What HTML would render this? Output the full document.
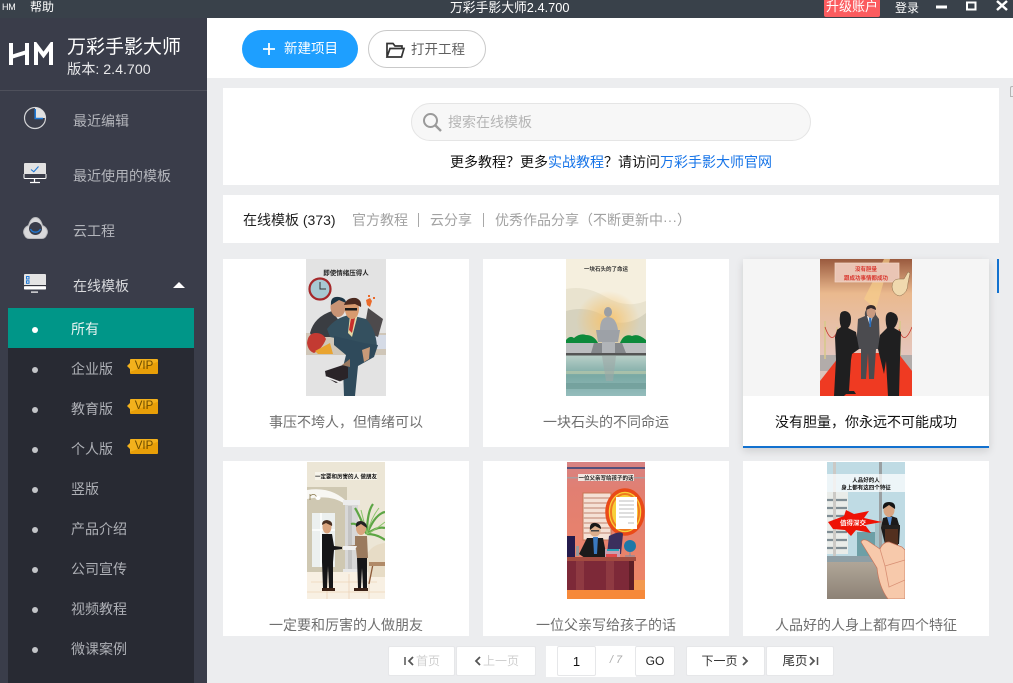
<!DOCTYPE html>
<html lang="zh-CN"><head><meta charset="utf-8"><title>万彩手影大师</title>
<style>
*{margin:0;padding:0;box-sizing:border-box}
html,body{width:1013px;height:683px;overflow:hidden;background:#ecedef}
body{position:relative;font-family:"Liberation Sans","Noto Sans CJK SC",sans-serif;font-size:14px}
.a{position:absolute;white-space:nowrap}
svg{position:absolute;display:block;overflow:hidden}
.nav{left:73px;color:#b3b5bb;line-height:20px;font-size:14px}
.sub{left:71px;color:#aeb0b6;line-height:20px;font-size:14px}
.dot{left:32px;width:6px;height:6px;border-radius:50%;background:#c4c5c9}
.vip{left:130px;width:28px;height:15px;background:linear-gradient(160deg,#f3b11c 50%,#e89f08 52%);border-radius:1px;color:#6d4c00;font-size:11.5px;line-height:15px;text-align:center}
.vip:before{content:"";position:absolute;left:-3px;top:4px;border-right:3px solid #f3b11c;border-top:3px solid transparent;border-bottom:3px solid transparent}
.card{background:#fff}
.cap{text-align:center;color:#6f6f6f;font-size:14px;line-height:20px}
.pg{background:#fff;border:1px solid #e6e7e9;height:30px;top:646px;text-align:center;line-height:29px;font-size:12px;color:#333;border-radius:2px}
.dim{color:#cfcfcf}
</style></head><body>

<div class="a" style="left:0;top:0;width:1013px;height:18px;background:#39414a"></div>
<div class="a" style="left:2px;top:2px;color:#fff;font-size:9px;line-height:10px;letter-spacing:-.3px">HM</div>
<div class="a" style="left:30px;top:-2px;color:#fff;font-size:12px;line-height:18px">帮助</div>
<div class="a" style="left:450px;top:-1px;color:#fff;font-size:12.800px;line-height:18px">万彩手影大师2.4.700</div>
<div class="a" style="left:824px;top:0;width:56px;height:17px;background:#fb5c5f;border-radius:0 0 2px 2px;color:#fff;font-size:13px;line-height:13px;text-align:center">升级账户</div>
<div class="a" style="left:895px;top:-1px;color:#fff;font-size:12px;line-height:18px">登录</div>
<svg style="left:930px;top:0" width="83" height="18"><path d="M6 5.500H17" stroke="#fff" stroke-width="3" fill="none" transform="translate(0,1.500)"/><rect x="37" y="2.500" width="8.500" height="7" fill="none" stroke="#fff" stroke-width="2"/><path d="M67 1L77 10M77 1L67 10" stroke="#fff" stroke-width="2.500" fill="none"/></svg>

<!-- sidebar -->
<div class="a" style="left:0;top:18px;width:207px;height:665px;background:#3a3d4a"></div>
<div class="a" style="left:0;top:90px;width:207px;height:1px;background:#4e505b"></div>
<svg style="left:8px;top:42px" width="48" height="24"><path d="M3 1V23M19 1V23M3 15L19 10M28 23V3L35.500 13L43 3V23" stroke="#fff" stroke-width="4" fill="none"/></svg>
<div class="a" style="left:67px;top:35px;color:#fff;font-size:19px;line-height:26px">万彩手影大师</div>
<div class="a" style="left:67px;top:61px;color:#e8e8ea;font-size:14.200px;line-height:18px">版本: 2.4.700</div>

<svg style="left:23px;top:106px" width="24" height="24"><circle cx="12" cy="12" r="10.500" fill="none" stroke="#d5d6d8" stroke-width="1.200"/><path d="M12 1.500A10.500 10.500 0 0 1 22.500 12H12Z" fill="#e2e2e2"/><path d="M12.200 3V12.500H20" fill="none" stroke="#1f79d6" stroke-width="1.600"/></svg>
<div class="a nav" style="top:111px">最近编辑</div>
<svg style="left:23px;top:162px" width="24" height="22"><rect x="1" y="1" width="22" height="15" rx="1" fill="#e2e2e2"/><rect x="1" y="12" width="22" height="4.500" fill="#3a3d4a"/><path d="M1 12V15.500Q1 16.500 2 16.500H22Q23 16.500 23 15.500V12" fill="none" stroke="#fff" stroke-width="1"/><path d="M11.500 17V20M7 20.500H17" stroke="#fff" stroke-width="1.200"/><path d="M8 7.500L10.800 9.800L15.500 4.500" fill="none" stroke="#1f79d6" stroke-width="1.100"/></svg>
<div class="a nav" style="top:166px">最近使用的模板</div>
<svg style="left:23px;top:217px" width="25" height="23"><path d="M1.500 18C-1 14 2 10 5.500 8.500C7 3.500 9.500 .5 12.500 .5C15.500 .5 18 3.500 19.500 8.500C23 10 26 14 23.500 18C22.500 20.500 21 21.500 19 21.500H6C4 21.500 2.500 20.500 1.500 18Z" fill="#d9d9db" stroke="#b8b9bc" stroke-width="1"/><circle cx="12.500" cy="11.500" r="6.500" fill="#3a3d4a"/><path d="M7.500 12A5.500 5.500 0 0 0 17.500 12" fill="none" stroke="#1f79d6" stroke-width="1.300"/></svg>
<div class="a nav" style="top:221px">云工程</div>
<svg style="left:23px;top:273px" width="24" height="22"><rect x="1" y="1" width="22" height="15.500" rx="1" fill="#e4e4e4"/><rect x="1" y="12" width="22" height="1.300" fill="#33343d"/><rect x="1" y="13.300" width="22" height="3.200" rx="1" fill="#fff"/><rect x="8" y="18.500" width="7" height="1.200" fill="#fff"/><rect x="3.500" y="3.500" width="2.500" height="2.500" fill="none" stroke="#1f79d6" stroke-width="1"/><rect x="3.500" y="7.800" width="2.500" height="2.500" fill="none" stroke="#1f79d6" stroke-width="1"/></svg>
<div class="a nav" style="top:276px;color:#d8d9dc">在线模板</div>
<div class="a" style="left:173px;top:282px;border-left:6px solid transparent;border-right:6px solid transparent;border-bottom:6px solid #fff"></div>

<div class="a" style="left:8px;top:348px;width:186px;height:335px;background:#282a33"></div>
<div class="a" style="left:8px;top:308px;width:186px;height:40px;background:#009688"></div>
<div class="a dot" style="top:327px;background:#fff"></div><div class="a sub" style="top:319px;color:#e6f3f1">所有</div>
<div class="a dot" style="top:367px"></div><div class="a sub" style="top:359px">企业版</div><div class="a vip" style="top:359px">VIP</div>
<div class="a dot" style="top:407px"></div><div class="a sub" style="top:399px">教育版</div><div class="a vip" style="top:399px">VIP</div>
<div class="a dot" style="top:447px"></div><div class="a sub" style="top:439px">个人版</div><div class="a vip" style="top:439px">VIP</div>
<div class="a dot" style="top:487px"></div><div class="a sub" style="top:479px">竖版</div>
<div class="a dot" style="top:527px"></div><div class="a sub" style="top:519px">产品介绍</div>
<div class="a dot" style="top:567px"></div><div class="a sub" style="top:559px">公司宣传</div>
<div class="a dot" style="top:607px"></div><div class="a sub" style="top:599px">视频教程</div>
<div class="a dot" style="top:647px"></div><div class="a sub" style="top:639px">微课案例</div>

<!-- toolbar -->
<div class="a" style="left:207px;top:18px;width:806px;height:60px;background:#fff"></div>
<div class="a" style="left:242px;top:30px;width:116px;height:38px;border-radius:19px;background:#1e9fff;color:#fff;font-size:13.500px;line-height:38px;padding-left:42px">新建项目</div>
<svg style="left:262px;top:42px" width="14" height="14"><path d="M7 1V13M1 7H13" stroke="#fff" stroke-width="1.800"/></svg>
<div class="a" style="left:368px;top:30px;width:118px;height:38px;border-radius:19px;background:#fff;border:1px solid #c9c9c9;color:#5f5f5f;font-size:13.500px;line-height:38px;padding-left:42px">打开工程</div>
<svg style="left:385px;top:41px" width="21" height="18"><path d="M2 16V2.500H8L10 5H17V7.500M2 16H16.500L19 7.500H5L2 16Z" fill="none" stroke="#333" stroke-width="1.700"/></svg>

<!-- search card -->
<div class="a card" style="left:223px;top:88px;width:776px;height:97px"></div>
<div class="a" style="left:411px;top:103px;width:400px;height:38px;border-radius:19px;background:#f7f7f7;border:1px solid #e5e5e5"></div>
<svg style="left:421px;top:111px" width="22" height="22"><circle cx="9.500" cy="9.500" r="6.500" fill="none" stroke="#9a9a9a" stroke-width="2"/><path d="M14 14L20 20" stroke="#9a9a9a" stroke-width="2.400"/></svg>
<div class="a" style="left:448px;top:112px;color:#b5b5b5;font-size:14px;line-height:20px">搜索在线模板</div>
<div class="a" style="left:450px;top:152px;color:#111;font-size:14px;line-height:20px">更多教程？更多<span style="color:#1674e8">实战教程</span>？请访问<span style="color:#1674e8">万彩手影大师官网</span></div>

<!-- tabs -->
<div class="a card" style="left:223px;top:195px;width:776px;height:48px"></div>
<div class="a" style="left:243px;top:210px;color:#222;font-size:14px;line-height:20px">在线模板 (373)</div>
<div class="a" style="left:352px;top:210px;color:#a2a2a2;font-size:14px;line-height:20px">官方教程</div>
<div class="a" style="left:418px;top:213px;width:1px;height:14px;background:#a8a8a8"></div>
<div class="a" style="left:430px;top:210px;color:#a2a2a2;font-size:14px;line-height:20px">云分享</div>
<div class="a" style="left:483px;top:213px;width:1px;height:14px;background:#a8a8a8"></div>
<div class="a" style="left:495px;top:210px;color:#a2a2a2;font-size:14px;line-height:20px">优秀作品分享（不断更新中···）</div>
<div class="a" style="left:1010px;top:86px;width:3px;height:11px;border:1px solid #b5b5b5;border-right:0;border-radius:2px 0 0 0"></div>

<!-- cards -->
<div class="a card" style="left:223px;top:259px;width:246px;height:188px"></div>
<div class="a card" style="left:483px;top:259px;width:246px;height:188px"></div>
<div class="a card" style="left:743px;top:259px;width:246px;height:189px;box-shadow:0 3px 8px rgba(0,0,0,.13)"></div>
<div class="a" style="left:743px;top:259px;width:246px;height:137px;background:#f5f5f5"></div>
<div class="a" style="left:743px;top:446px;width:246px;height:2px;background:#1271cf"></div>
<div class="a card" style="left:223px;top:461px;width:246px;height:175px"></div>
<div class="a card" style="left:483px;top:461px;width:246px;height:175px"></div>
<div class="a card" style="left:743px;top:461px;width:246px;height:175px"></div>
<div class="a" style="left:997px;top:259px;width:2px;height:34px;background:#1271cf"></div>

<!-- thumb 1 -->
<svg style="left:306px;top:259px" width="80" height="137" viewBox="0 0 80 137">
<rect width="80" height="137" fill="#e3e3e3"/>
<rect y="74" width="80" height="22" fill="#cfc6b8"/>
<path d="M56 76H80V90H60Z" fill="#d5dbe6"/>
<text x="40" y="16" font-size="6.500" font-weight="700" text-anchor="middle" fill="#222">即使情绪压得人</text>
<circle cx="14" cy="30" r="10.500" fill="#a8c9d2" stroke="#a5282a" stroke-width="2.200"/><path d="M14 23V30H20" stroke="#333" stroke-width="1" fill="none"/>
<path d="M62 49L77 60L72 78L58 72Z" fill="#4d4a4c"/>
<path d="M4 74Q8 58 26 52L36 66L28 78H6Z" fill="#3a3d42"/>
<ellipse cx="32" cy="48" rx="7.500" ry="10" fill="#c99475"/><path d="M25 46Q24 37 33 38Q40 39 40 44L33 41Z" fill="#1c3545"/>
<path d="M1 84Q2 74 10 74Q17 74 20 80Q16 90 8 94Q2 92 1 84Z" fill="#c33a32"/>
<path d="M9 92L24 84L27 95H12Z" fill="#e9a430"/>
<path d="M21 70Q30 58 44 56L60 60Q70 70 71 88L60 90L34 80L24 78Z" fill="#34505f"/>
<path d="M28 77L58 84L72 86L68 98L52 107L49 137H38L37 108L40 96L28 86Z" fill="#2f4a5b"/>
<path d="M44 56L52 55L46 78L42 74Z" fill="#e4d8a5"/><path d="M45 59L49 59L46 74L43 71Z" fill="#c72f2b"/>
<ellipse cx="46" cy="50" rx="7" ry="10" fill="#d89a6e"/><path d="M38 46Q41 38 50 39Q56 41 55 48L49 45Z" fill="#4b2a20"/><rect x="39" y="49" width="12" height="2.500" fill="#1a1a1a"/>
<path d="M60 41l4-2 2 3-2 6-3-2zM67 38h2v2h-2zM62 36h2v2h-2z" fill="#ea6a2a"/>
<path d="M19 112L37 106L42 108V119L30 124L20 118Z" fill="#2a2428"/><path d="M20 118L36 124" stroke="#f0f0f0" stroke-width="1.500"/><path d="M36 106L44 100V108Z" fill="#9a7a62"/>
<path d="M56 91L64 88L63 100L58 103Z" fill="#c89a78"/>
</svg>

<!-- thumb 2 -->
<svg style="left:566px;top:259px" width="80" height="137" viewBox="0 0 80 137">
<defs><radialGradient id="g1"><stop offset="0" stop-color="#f5c36f"/><stop offset="1" stop-color="#f5c36f" stop-opacity="0"/></radialGradient>
<linearGradient id="w1" x1="0" y1="0" x2="0" y2="1"><stop offset="0" stop-color="#b9cfc8"/><stop offset=".5" stop-color="#7aa9a4"/><stop offset="1" stop-color="#94bcbc"/></linearGradient></defs>
<rect width="80" height="137" fill="#f5efde"/>
<path d="M0 30Q20 26 40 38Q60 50 80 42V90H0Z" fill="#e9e3cf"/>
<path d="M0 52Q25 45 45 62Q62 68 80 54V90H0Z" fill="#d6d2be"/>
<ellipse cx="42" cy="62" rx="32" ry="30" fill="url(#g1)"/>
<text x="40" y="12" font-size="5.500" font-weight="700" text-anchor="middle" fill="#333">一块石头的了命运</text>
<ellipse cx="42" cy="53" rx="4" ry="5" fill="#9a9ea4"/>
<path d="M34 71Q34 58 42 58Q50 58 52 71Z" fill="#a4a8ae"/>
<path d="M30 71H54L52 83H32Z" fill="#9da1a7"/>
<path d="M0 81Q4 76 8 79Q14 74 20 76Q28 76 32 84V89H0ZM54 84Q58 74 66 77Q72 74 80 81V89H54Z" fill="#0d8a3b"/>
<path d="M0 84H28L26 94H0ZM56 84H80V94H58Z" fill="#bcbec0"/>
<path d="M28 84H36V94H25ZM49 84H56L60 94H49Z" fill="#85888c"/>
<rect x="36" y="83" width="13" height="12" fill="#b1b4b8"/>
<rect y="94" width="80" height="2.500" fill="#555"/>
<rect y="96.500" width="80" height="40.500" fill="url(#w1)"/>
<rect y="112" width="80" height="3" fill="#b8c7a9" opacity=".7"/><rect y="124" width="80" height="6" fill="#6d9b97" opacity=".7"/>
<path d="M36 97H50L47 122H40Z" fill="#9fa9a6" opacity=".6"/>
</svg>

<!-- thumb 3 -->
<svg style="left:820px;top:259px" width="92" height="137" viewBox="0 0 92 137">
<defs><linearGradient id="b3" x1="0" y1="0" x2="0" y2="1"><stop offset="0" stop-color="#9a5a3e"/><stop offset=".25" stop-color="#eab98e"/><stop offset=".7" stop-color="#e5c6bd"/><stop offset="1" stop-color="#cfc1b9"/></linearGradient></defs>
<rect width="92" height="137" fill="url(#b3)"/>
<path d="M44 40L64 0H70L56 50Z" fill="#f6cd8a" opacity=".7"/>
<rect x="15" y="4" width="64" height="19" fill="#eac5b5" stroke="#f3d6c6" stroke-width=".7"/>
<text x="46" y="12" font-size="5.500" font-weight="700" text-anchor="middle" fill="#d9372e">没有胆量</text>
<text x="46" y="21" font-size="5.500" font-weight="700" text-anchor="middle" fill="#d9372e">跟成功事情都成功</text>
<path d="M72 28Q72 21 78 20L84 20L88 13L90 14L88 24Q88 34 80 37Q73 36 72 28Z" fill="#f0d9ae" stroke="#8a6b4a" stroke-width=".5"/>
<path d="M0 96H92V112H0Z" fill="#b2acaa"/>
<path d="M5 62V100M80 62V100" stroke="#d8c98c" stroke-width="1.600"/><path d="M17 68V96M79 68V98" stroke="#d8c98c" stroke-width="1.200"/>
<path d="M5 68Q12 88 18 70M79 70Q84 88 92 68" stroke="#c7372f" fill="none" stroke-width=".8"/>
<path d="M0 122L22 94H78L92 112V137H0Z" fill="#ef3a22"/>
<path d="M50 49Q56 50 56 56L59 60L60 90H56L54 120H49L48 94L46 120H41L41 90L36 90L38 60L45 57Q44 50 50 49Z" fill="#4b4b4f"/>
<path d="M47 57H53L50 67Z" fill="#eee"/><path d="M49 58H51.500L51 68H49.500Z" fill="#2a6fbe"/>
<ellipse cx="51" cy="53" rx="4.500" ry="6" fill="#c99a80"/><path d="M46 51Q46 46 51 46Q56 46 56 51L51 49Z" fill="#33292a"/>
<path d="M20 57Q20 52 25 52Q31 53 31 60Q31 66 28 69L36 73L39 90L32 95L31 101L29 132H34L36 135H26L24 137H14L16 100L15 78L17 71L21 68Q19 63 20 57Z" fill="#1f1f20"/>
<path d="M66 57Q67 53 71 53Q77 54 78 60Q77 66 74 69L81 73L80 100L79 137H68L66 102L64 115L58 90L60 76L67 69Q65 63 66 57Z" fill="#1f1f20"/>
</svg>

<!-- thumb 4 -->
<svg style="left:307px;top:462px" width="78" height="137" viewBox="0 0 78 137">
<rect width="78" height="137" fill="#ece6d6"/>
<rect x="0" y="25" width="40" height="85" fill="#cfc8b2"/>
<rect x="5" y="51" width="23" height="54" fill="#ecf0ef"/><path d="M14 51V105M5 68H28" stroke="#fff" stroke-width="1.500"/>
<path d="M0 28Q26 24 42 42H38Q24 32 0 37Z" fill="#f8f7f3"/>
<path d="M3 38V32M3 34Q8 30 10 36" stroke="#8a7a50" fill="none" stroke-width=".8"/><ellipse cx="11" cy="36" rx="2.500" ry="2" fill="#fff"/>
<rect x="38" y="40" width="13" height="70" fill="#d8d8d8"/><rect x="41" y="44" width="4" height="66" fill="#c4c4c4"/>
<rect x="36" y="38" width="17" height="5" fill="#ececec"/><rect x="36" y="107" width="17" height="5" fill="#e8e8e8"/>
<path d="M0 110H78V137H0Z" fill="#f8f0e3"/>
<path d="M4 120H70M0 130H78M20 112V137M42 112V137M62 112V137" stroke="#ecd3b9" stroke-width=".8"/>
<g fill="none" stroke="#5ca544" stroke-width="2.200"><path d="M60 72Q50 60 44 62"/><path d="M60 72Q52 52 48 46"/><path d="M60 72Q60 50 66 42"/><path d="M60 72Q68 52 78 50"/><path d="M60 72Q70 64 78 66"/><path d="M60 72Q70 72 78 78"/></g>
<g fill="none" stroke="#8cc46c" stroke-width="1"><path d="M60 72Q56 56 54 48"/><path d="M60 72Q64 56 72 46"/><path d="M60 72Q68 68 78 60"/></g>
<path d="M60 102V92Q66 82 78 81V115H62Z" fill="#e7dcc6"/><path d="M66 102L62 122" stroke="#8c5a38" stroke-width="1.300"/><rect x="62" y="100" width="16" height="4" fill="#b08a68"/>
<rect y="10" x="8" width="62" height="8" fill="#f7f4ea"/>
<text x="39" y="16.500" font-size="5.500" font-weight="700" text-anchor="middle" fill="#111">一定要和厉害的人 做朋友</text>
<ellipse cx="20" cy="65" rx="4.500" ry="6.500" fill="#d9a47e"/><path d="M15 63Q15 58 20 58Q26 59 25 64L19 61Z" fill="#4a3022"/>
<path d="M15 72H25L27 84L35 85V87L27 88L26 100L26 126H22L21 104L20 126H16L15 100Z" fill="#151517"/>
<path d="M15 126H22V129H15ZM21 126H28V129H21Z" fill="#3c2216"/>
<ellipse cx="54" cy="66" rx="5" ry="7" fill="#d9a47e"/><path d="M49 65Q48 59 54 59Q60 60 60 66L54 62Z" fill="#222"/>
<path d="M48 74H60L61 96H50L49 87L40 87V84L48 83Z" fill="#9a7a5e"/><path d="M36 84H50L48 88H36Z" fill="#f1f1f1"/>
<path d="M50 96H60L60 126H56L55 106L54 126H51Z" fill="#161618"/>
<path d="M47 126H54V129H47ZM54 126H61V129H54Z" fill="#3c2216"/>
</svg>

<!-- thumb 5 -->
<svg style="left:567px;top:462px" width="78" height="137" viewBox="0 0 78 137">
<defs><linearGradient id="w5" x1="0" y1="0" x2="0" y2="1"><stop offset="0" stop-color="#d88383"/><stop offset=".2" stop-color="#e17f72"/><stop offset="1" stop-color="#ef8566"/></linearGradient></defs>
<rect width="78" height="137" fill="url(#w5)"/>
<rect y="5" width="78" height="2" fill="#55507a"/><rect y="15" width="78" height="1.500" fill="#aa9ea0"/>
<rect x="11" y="12" width="56" height="7" fill="#f2e6e0"/>
<text x="39" y="17.800" font-size="5.500" font-weight="700" text-anchor="middle" fill="#222">一位父亲写给孩子的话</text>
<rect x="16" y="31" width="28" height="47" fill="#f5e1d5" stroke="#c67655"/>
<path d="M16 36H44M16 41H44M16 46H44M16 51H44M16 56H44M16 61H44M16 66H44M16 71H44" stroke="#d1a291" stroke-width="1.500"/>
<ellipse cx="58" cy="50" rx="18" ry="22" fill="#f8cf3a" stroke="#ea4a18" stroke-width="3.500"/>
<ellipse cx="58" cy="50" rx="14" ry="18" fill="none" stroke="#ef7a20" stroke-width="2"/>
<rect x="49" y="35" width="21" height="32" fill="#fff"/>
<path d="M52 39H67M52 43H67M52 47H67M52 51H67M52 55H67M61 61H67" stroke="#a8a8a8" stroke-width=".7"/>
<rect x="0" y="74" width="8" height="22" fill="#241b4c"/><rect x="9" y="84" width="3" height="10" fill="#999"/>
<path d="M42 74Q54 68 56 72L54 92H40Z" fill="#3b2f5d"/>
<circle cx="28" cy="69" r="5.500" fill="#dcae8c"/><path d="M23 68Q22 60 29 61Q34 62 34 67L28 64Z" fill="#181818"/><rect x="24" y="68" width="8" height="1.500" fill="#444"/>
<path d="M20 76L36 76L40 96H18L12 92L14 88Z" fill="#1a1a1a"/><path d="M26 75H31L30 92H27Z" fill="#3a79bf"/>
<circle cx="63" cy="84" r="6" fill="#1e78a7"/><path d="M58 94H68M63 90V94" stroke="#7a8ca3" stroke-width="1"/>
<rect x="38" y="87" width="15" height="8" fill="#c8a0b0"/><rect x="39" y="92" width="11" height="3" fill="#e24a4a"/><rect x="40" y="87" width="12" height="2" fill="#28a1b5"/>
<rect y="95" width="69" height="4" fill="#a24b3f"/>
<rect y="99" width="66" height="29" fill="#7d2938"/><path d="M13 99V128M43 99V128" stroke="#8f3a42" stroke-width="8"/>
<rect x="62" y="99" width="5" height="31" fill="#5e1e26"/>
<path d="M0 128H78V137H0Z" fill="#f6893a"/><path d="M67 118H78V128H67Z" fill="#f39a50"/>
</svg>

<!-- thumb 6 -->
<svg style="left:827px;top:462px" width="78" height="137" viewBox="0 0 78 137">
<defs><linearGradient id="f6" x1="0" y1="0" x2="0" y2="1"><stop offset="0" stop-color="#b0a698"/><stop offset="1" stop-color="#8d8276"/></linearGradient></defs>
<rect width="78" height="137" fill="#bfdbe4"/>
<rect x="0" y="30" width="21" height="62" fill="#e9ece9"/><path d="M0 38H20M0 46H20M0 54H20M0 70H20M0 78H20M0 86H20" stroke="#7f8d94" stroke-width="2.200"/>
<rect x="30" y="70" width="24" height="28" fill="#6d9fa6"/><rect x="48" y="60" width="22" height="38" fill="#a5c2c8"/>
<rect x="6" y="0" width="3" height="97" fill="#cbc9c5"/><rect x="52" y="0" width="3" height="97" fill="#9aa0a2"/>
<rect y="94" width="78" height="6" fill="#8e9fa6"/>
<rect y="100" width="78" height="37" fill="url(#f6)"/>
<rect y="12" width="78" height="18" fill="#fff" opacity=".72"/>
<text x="39" y="20" font-size="5.500" font-weight="700" text-anchor="middle" fill="#111">人品好的人</text>
<text x="39" y="27.500" font-size="5.500" font-weight="700" text-anchor="middle" fill="#111">身上都有这四个特征</text>
<path d="M1 60L17 54L19 48L27 52L42 49L37 56L55 60L38 63L44 71L29 68L24 74L18 68L6 67Z" fill="#ee1205"/>
<text x="26" y="63" font-size="6.500" font-weight="700" text-anchor="middle" fill="#fff">值得深交</text>
<path d="M56 56L54 66L58 82H72L73 66L70 56L64 54Z" fill="#1c1a1a"/>
<path d="M60 55H65L63 66Z" fill="#5a8fd0"/><path d="M55 63H73V67H55Z" fill="#23201f"/>
<ellipse cx="62" cy="48" rx="5.500" ry="7" fill="#d9a582"/><path d="M56 47Q55 40 62 40Q69 40 68 47L62 43Z" fill="#151515"/>
<rect x="58" y="67" width="13" height="17" fill="#53301f"/>
<path d="M34 80Q36 76 41 79L53 87Q56 80 62 80L75 85L78 88V137H61Q52 125 50 106Z" fill="#f7c9ab" stroke="#c7745a" stroke-width=".7"/>
<path d="M53 87L58 104L78 98M58 104L62 125L78 118" fill="none" stroke="#d88f74" stroke-width=".8"/>
</svg>

<div class="a cap" style="left:223px;top:412px;width:246px">事压不垮人，但情绪可以</div>
<div class="a cap" style="left:483px;top:412px;width:246px">一块石头的不同命运</div>
<div class="a cap" style="left:743px;top:412px;width:246px;color:#111">没有胆量，你永远不可能成功</div>
<div class="a cap" style="left:223px;top:615px;width:246px">一定要和厉害的人做朋友</div>
<div class="a cap" style="left:483px;top:615px;width:246px">一位父亲写给孩子的话</div>
<div class="a cap" style="left:743px;top:615px;width:246px">人品好的人身上都有四个特征</div>

<!-- pagination -->
<div class="a pg dim" style="left:388px;width:67px;padding-left:13px">首页</div>
<svg style="left:404px;top:656px" width="12" height="10"><path d="M1 1V9" stroke="#555" stroke-width="1.500"/><path d="M9 1L5 5L9 9" fill="none" stroke="#555" stroke-width="1.800"/></svg>
<div class="a pg dim" style="left:456px;width:80px;padding-left:10px">上一页</div>
<svg style="left:473px;top:656px" width="9" height="10"><path d="M7 1L3 5L7 9" fill="none" stroke="#555" stroke-width="1.800"/></svg>
<div class="a" style="left:546px;top:646px;width:90px;height:31px;background:#fff"></div>
<div class="a pg" style="left:557px;width:39px;font-size:13px;color:#111">1</div>
<div class="a" style="left:596px;top:646px;width:40px;height:30px;text-align:center;line-height:29px;font-size:11px;color:#aaa;font-style:italic">/ 7</div>
<div class="a pg" style="left:635px;width:40px;color:#222">GO</div>
<div class="a pg" style="left:686px;width:79px;padding-right:12px">下一页</div>
<svg style="left:741px;top:656px" width="9" height="10"><path d="M2 1L6 5L2 9" fill="none" stroke="#555" stroke-width="1.800"/></svg>
<div class="a pg" style="left:766px;width:68px;padding-right:10px;font-size:12.500px">尾页</div>
<svg style="left:807px;top:656px" width="12" height="10"><path d="M3 1L7 5L3 9" fill="none" stroke="#555" stroke-width="1.800"/><path d="M10.500 1V9" stroke="#555" stroke-width="1.500"/></svg>

</body></html>
